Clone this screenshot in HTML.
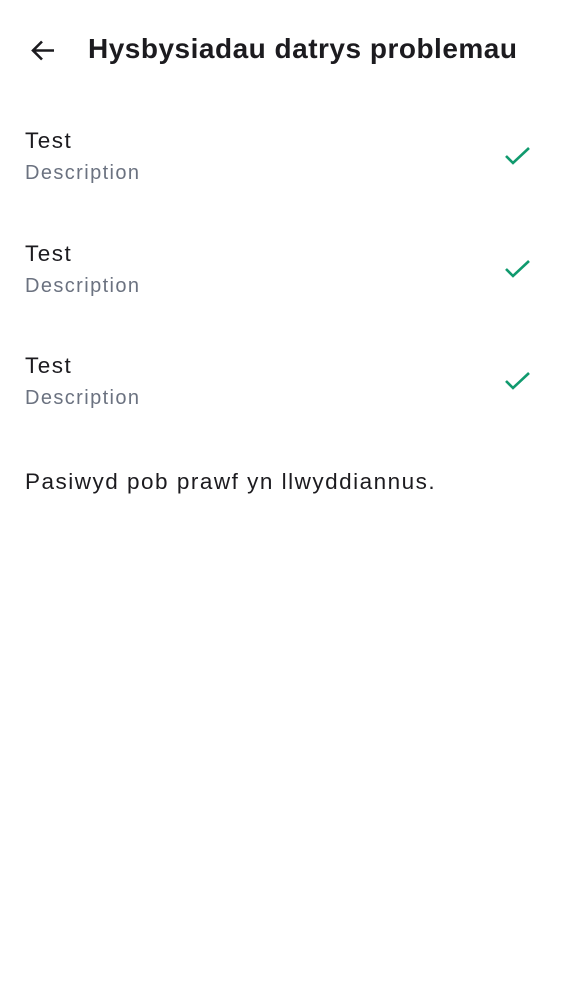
<!DOCTYPE html>
<html><head><meta charset="utf-8"><style>
body{margin:0;width:562px;height:1000px;background:#fff;font-family:"Liberation Sans",sans-serif;position:relative;overflow:hidden}
.t{position:absolute;white-space:nowrap}
.title{left:88px;top:33px;font-size:28px;font-weight:bold;color:#1c1b1f;letter-spacing:0.5px}
.n{left:25px;font-size:22.5px;color:#1c1b1f;letter-spacing:1.5px}
.d{left:25px;font-size:20px;color:#6b7280;letter-spacing:1.4px}
svg{position:absolute}
</style></head><body>
<svg style="left:29px;top:37px" width="28" height="28" viewBox="0 0 28 28"><path d="M25 13.5H5M13 4.5L4 13.5L13 22.5" fill="none" stroke="#1c1b1f" stroke-width="2.6"/></svg>
<div class="t title">Hysbysiadau datrys problemau</div>

<div class="t n" style="top:128px">Test</div>
<div class="t d" style="top:162px">Description</div>
<svg style="left:503px;top:146px" width="30" height="22"><path d="M3 10L10 17L26 2" fill="none" stroke="#109a6e" stroke-width="2.6"/></svg>

<div class="t n" style="top:241px">Test</div>
<div class="t d" style="top:275px">Description</div>
<svg style="left:503px;top:259px" width="30" height="22"><path d="M3 10L10 17L26 2" fill="none" stroke="#109a6e" stroke-width="2.6"/></svg>

<div class="t n" style="top:353px">Test</div>
<div class="t d" style="top:387px">Description</div>
<svg style="left:503px;top:371px" width="30" height="22"><path d="M3 10L10 17L26 2" fill="none" stroke="#109a6e" stroke-width="2.6"/></svg>

<div class="t n" style="top:469px">Pasiwyd pob prawf yn llwyddiannus.</div>
</body></html>
